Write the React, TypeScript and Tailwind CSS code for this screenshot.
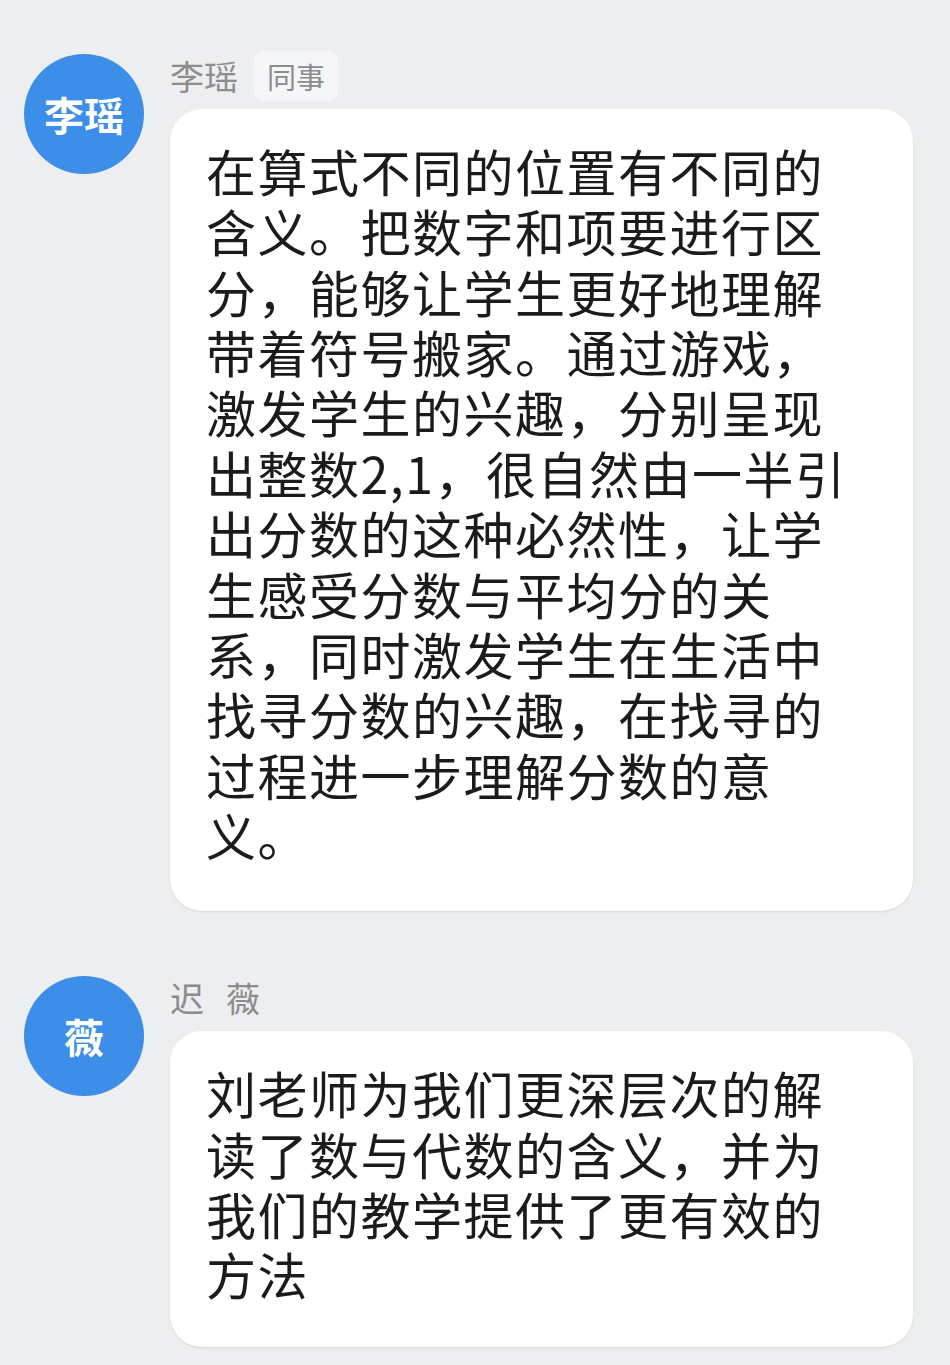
const FONT = "font-['Noto_Sans_CJK_SC','Noto_Sans',sans-serif]";

const MESSAGES = [
  {
    avatar: "李瑶",
    name: ["李瑶"],
    tag: "同事",
    pad: "pb-[47px]",
    text: "在算式不同的位置有不同的含义。把数字和项要进行区分，能够让学生更好地理解带着符号搬家。通过游戏，激发学生的兴趣，分别呈现出整数2,1，很自然由一半引出分数的这种必然性，让学生感受分数与平均分的关系，同时激发学生在生活中找寻分数的兴趣，在找寻的过程进一步理解分数的意义。",
  },
  {
    avatar: "薇",
    name: ["迟", "薇"],
    tag: null,
    pad: "pb-[43px]",
    text: "刘老师为我们更深层次的解读了数与代数的含义，并为我们的教学提供了更有效的方法",
  },
];

function Message({ msg }: { msg: (typeof MESSAGES)[number] }) {
  return (
    <div className="flex gap-[26px]">
      <div className="mt-[3px] flex h-[120px] w-[120px] shrink-0 items-center justify-center rounded-full bg-[#3d8ee8]">
        <span className="text-[40px] font-bold leading-none text-white">{msg.avatar}</span>
      </div>
      <div className="flex min-w-0 flex-1 flex-col gap-[8px]">
        <div className="flex h-[50px] items-center gap-[16px]">
          <div className="flex gap-[22px] text-[34px] leading-none text-[#8b8c8e]">
            {msg.name.map((n) => (
              <span key={n}>{n}</span>
            ))}
          </div>
          {msg.tag && (
            <span className="flex h-[50px] items-center rounded-[10px] bg-[#f5f6f8] px-[13px] text-[29px] leading-none text-[#8b8c8e]">
              {msg.tag}
            </span>
          )}
        </div>
        <div className={`rounded-[32px] bg-white pl-[36px] pr-[20px] pt-[31px] shadow-[0_1px_2px_rgba(0,0,0,0.1)] ${msg.pad}`}>
          <p className="w-[645px] text-[50px] leading-[60.36px] tracking-[1.5px] text-[#1b1b1b]">{msg.text}</p>
        </div>
      </div>
    </div>
  );
}

export default function App() {
  return (
    <div className={`${FONT} flex min-h-[1365px] w-full flex-col gap-[62px] bg-[#edeef0] pb-[20px] pl-[24px] pr-[37px] pt-[51px]`}>
      {MESSAGES.map((m) => (
        <Message key={m.avatar} msg={m} />
      ))}
    </div>
  );
}
